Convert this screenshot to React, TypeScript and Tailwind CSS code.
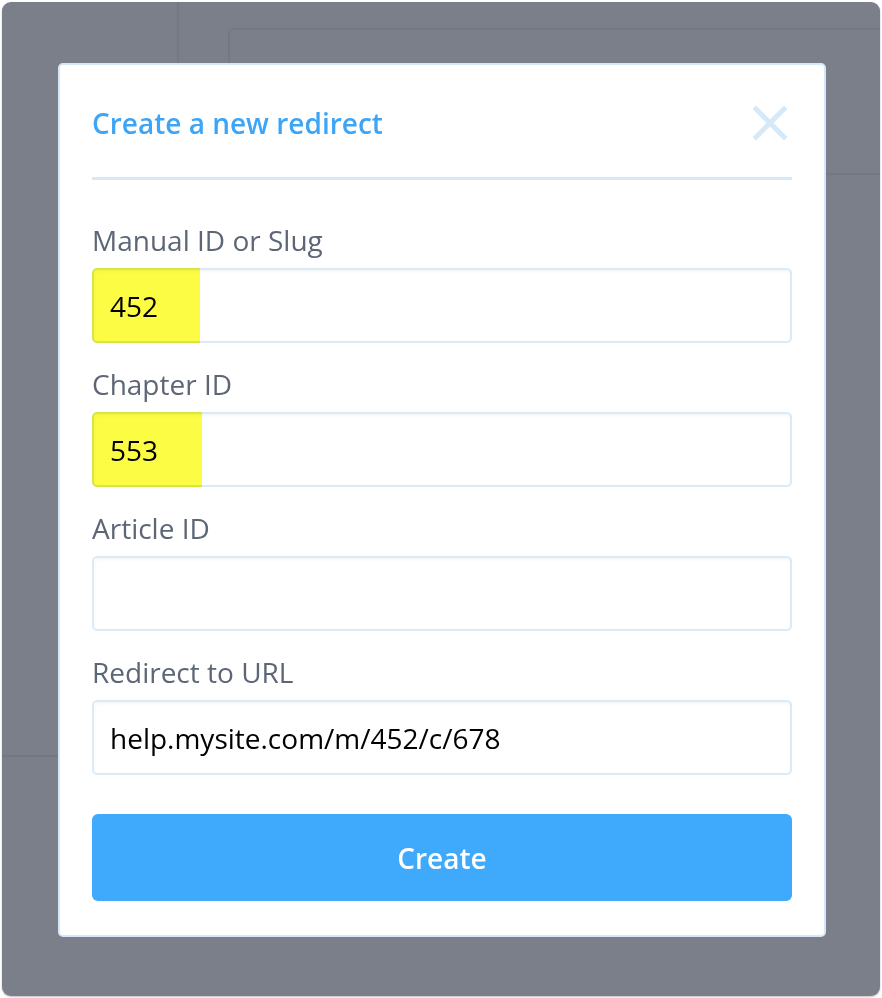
import React from "react";

const font = { fontFamily: '"Open Sans", "Noto Sans", sans-serif' };

function Field({ label, value, highlight }: { label: string; value?: string; highlight?: number }) {
  return (
    <div className="flex flex-col">
      <div className="h-[36px] leading-[36px] text-[28px] text-[#5d6676]">{label}</div>
      <div className="relative mt-[10px] h-[75px] rounded-[5px] border-2 border-[#d9eaf8] bg-white shadow-[inset_0_2px_3px_rgba(0,0,0,0.04)] flex items-center pl-[16px]">
        {highlight ? (
          <span
            className="absolute left-[-2px] top-[-2px] bottom-[-2px] bg-[#fcfc45] mix-blend-multiply rounded-l-[5px]"
            style={{ width: highlight }}
          />
        ) : null}
        <span className="relative text-[28px] text-black leading-none">{value}</span>
      </div>
    </div>
  );
}

export default function App() {
  return (
    <div className="w-[882px] h-[998px] bg-white p-[2px]" style={font}>
      <div className="relative w-full h-full rounded-[9px] bg-[#7a7f89] overflow-hidden shadow-[0_1px_2px_rgba(0,0,0,0.25)]">
        {/* underlying page outlines */}
        <div className="absolute left-[175px] top-0 w-[2px] h-[70px] bg-[#737883]" />
        <div className="absolute left-[226px] top-[26px] w-[700px] h-[60px] rounded-tl-[6px] border-l-2 border-t-2 border-[#737883]" />
        <div className="absolute left-[820px] top-[171px] w-[80px] h-[2px] bg-[#737883]" />
        <div className="absolute left-0 top-[753px] w-[60px] h-[2px] bg-[#737883]" />

        <div className="relative pl-[56px] pt-[61px]">
          <div className="w-[768px] h-[874px] rounded-[5px] border-2 border-[#d6e8f8] bg-white px-[32px] pt-[38px]">
            <div className="flex items-center justify-between h-[40px]">
              <div className="text-[28px] font-semibold text-[#3ea5f6] leading-[40px]">Create a new redirect</div>
              <svg width="34" height="34" viewBox="0 0 34 34" className="mr-[5px]">
                <path d="M3 3 L31 31 M31 3 L3 31" stroke="#d5e9f9" strokeWidth="5" strokeLinecap="square" />
              </svg>
            </div>
            <div className="mt-[34px] h-[3px] bg-[#d6e9f9]" />
            <div className="mt-[42px] flex flex-col gap-[23px]">
              <Field label="Manual ID or Slug" value="452" highlight={108} />
              <Field label="Chapter ID" value="553" highlight={110} />
              <Field label="Article ID" />
              <Field label="Redirect to URL" value="help.mysite.com/m/452/c/678" />
            </div>
            <button className="mt-[39px] w-full h-[87px] rounded-[6px] bg-[#3fa9fb] text-white text-[28px] font-semibold">
              Create
            </button>
          </div>
        </div>
      </div>
    </div>
  );
}
